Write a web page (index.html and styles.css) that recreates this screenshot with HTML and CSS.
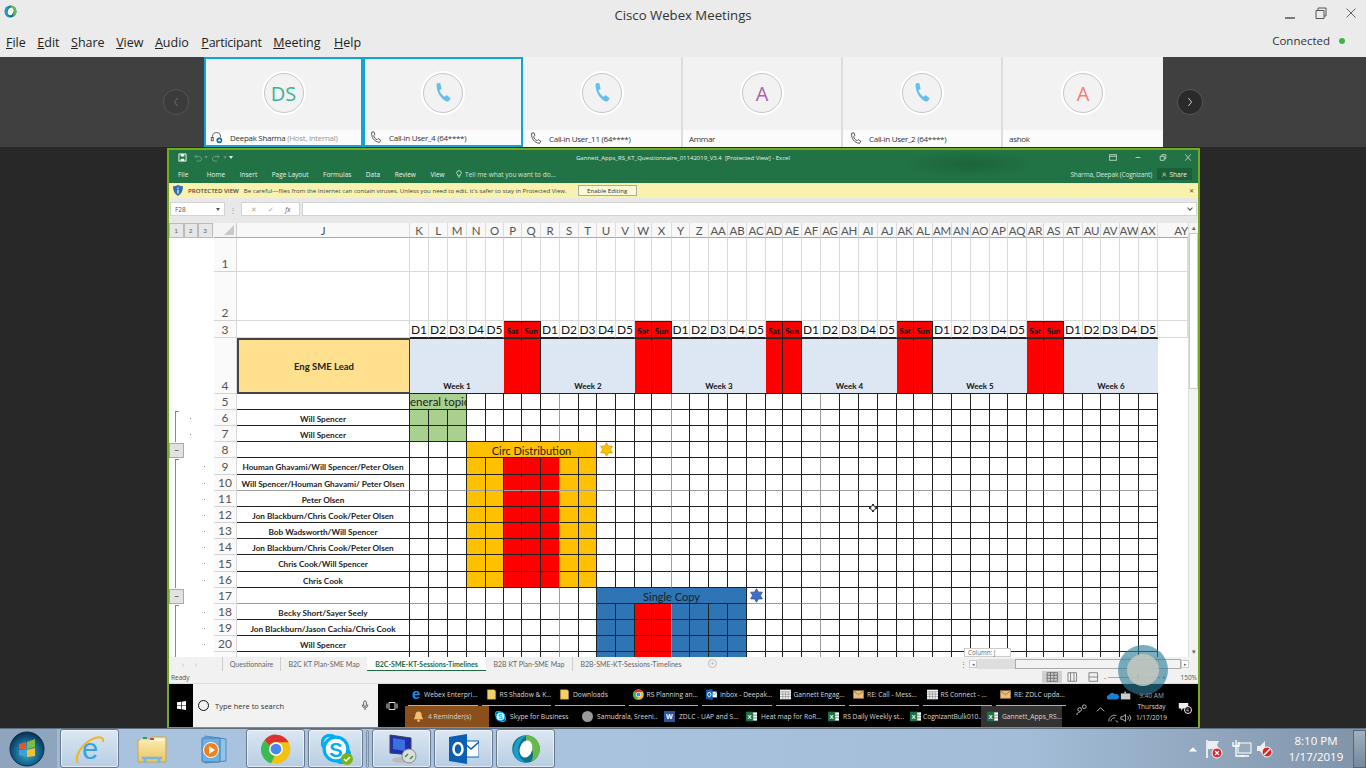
FILE: index.html
```html
<!DOCTYPE html>
<html lang="en">
<head>
<meta charset="utf-8">
<title>Cisco Webex Meetings</title>
<link rel="stylesheet" href="styles.css">
</head>
<body>
<svg class="sprite" aria-hidden="true">
  <defs>
    <radialGradient id="orbG" cx="50%" cy="60%" r="60%"><stop offset="0" stop-color="#3fb0c8"/><stop offset=".6" stop-color="#14648f"/><stop offset="1" stop-color="#0b2c4a"/></radialGradient>
    <linearGradient id="folderG" x1="0" y1="0" x2="0" y2="1"><stop offset="0" stop-color="#fdf0b4"/><stop offset="1" stop-color="#e8c566"/></linearGradient>
    <symbol id="phone" viewBox="0 0 24 24"><path d="M5 1.500 9 1l1.500 6.500-2.400 1.600c1 3 3 5.500 5.700 7l2.200-1.800 4.500 3.700-3 3.500C10 19.500 4.500 11 5 1.500Z" fill="#63c0ea"/></symbol>
    <symbol id="handset" viewBox="0 0 24 24"><path d="M5 2 9 1.500l2 5-2.500 2c1 3.500 3 6 6.500 7.500l2-2 4.500 3-2 4C10 20 3.500 12 5 2Z" fill="none" stroke="#444" stroke-width="1.600"/></symbol>
    <symbol id="webex" viewBox="0 0 24 24"><circle cx="12" cy="12" r="11" fill="#0e6f8e"/><path d="M12 1a11 11 0 0 1 11 11c0 5-3 9-7 10 3-4 2-12-4-14Z" fill="#66b94a"/><path d="M2 15C1 8 6 1 13 1 9 3 5 8 6 15c.6 4 3 6 6 8C7 23 3 20 2 15Z" fill="#1aa0c8"/><ellipse cx="12" cy="12" rx="5" ry="7" fill="#fff" transform="rotate(15 12 12)"/></symbol>
    <symbol id="xl" viewBox="0 0 16 16"><rect x="6" y="2" width="10" height="12" fill="#fff"/><path d="M10 2v12M6 6h10M6 10h10" stroke="#1d7044"/><rect y="1" width="10" height="14" fill="#1d7044"/><text x="5" y="11.500" font-family="Liberation Sans" font-size="9" font-weight="700" fill="#fff" text-anchor="middle">X</text></symbol>
    <symbol id="mail" viewBox="0 0 16 12"><rect x=".5" y=".5" width="15" height="11" fill="#e9c07d" stroke="#a7783a"/><path d="m.5.500 7.500 6 7.500-6" fill="none" stroke="#7c5a2a"/></symbol>
    <symbol id="cal" viewBox="0 0 16 14"><rect width="16" height="14" fill="#f0f0f0"/><path d="M0 3h16M0 6.500h16M0 10h16M4 3v11M8 3v11M12 3v11" stroke="#777" stroke-width=".8"/></symbol>
    <symbol id="chrome" viewBox="0 0 24 24"><circle cx="12" cy="12" r="11.500" fill="#f4c20d"/><path d="M12 .5A11.500 11.500 0 0 1 22 6.500H12a5.500 5.500 0 0 0-5 3L2.800 5A11.500 11.500 0 0 1 12 .5Z" fill="#db3236"/><path d="M2.800 5 7 9.500a5.500 5.500 0 0 0 4 8l-3 6A11.500 11.500 0 0 1 2.800 5Z" fill="#3cba54"/><circle cx="12" cy="12" r="5.500" fill="#fff"/><circle cx="12" cy="12" r="4.300" fill="#4885ed"/></symbol>
    <symbol id="skype" viewBox="0 0 24 24"><circle cx="7" cy="7" r="6" fill="none" stroke="#00aff0" stroke-width="2.500"/><circle cx="17" cy="17" r="6" fill="none" stroke="#00aff0" stroke-width="2.500"/><circle cx="12" cy="12" r="9.500" fill="#fff" stroke="#00aff0" stroke-width="2.500"/><text x="12" y="18" font-family="Liberation Sans" font-size="16" font-weight="700" fill="#00aff0" text-anchor="middle">S</text></symbol>
    <symbol id="outlook" viewBox="0 0 30 30"><rect x="14" y="7" width="16" height="16" fill="#fff" stroke="#0a5fb4"/><path d="m14 8 8 7 8-7" fill="none" stroke="#0a5fb4" stroke-width="1.500"/><path d="M0 3 18 0v30L0 27Z" fill="#0a5fb4"/><ellipse cx="9" cy="15" rx="4.500" ry="6" fill="none" stroke="#fff" stroke-width="2.500"/></symbol>
    <symbol id="bell" viewBox="0 0 12 12"><path d="M6 .5c2.500 0 3.500 2 3.500 4.500 0 2 1.500 3 1.500 4H1c0-1 1.500-2 1.500-4C2.500 2.500 3.500.5 6 .5Z" fill="#f0c070"/><circle cx="6" cy="10.500" r="1.400" fill="#f0c070"/></symbol>
    <symbol id="fold" viewBox="0 0 14 16"><path d="M1 1h10l2 2v12H1Z" fill="#f2cf6a" stroke="#b5902f" stroke-width=".6"/></symbol>
  </defs>
</svg>

<header class="wx-bar">
  <div class="wx-title-row">
    <svg class="wx-logo"><use href="#webex"/></svg>
    <div class="wx-title">Cisco Webex Meetings</div>
    <div class="wx-controls">
      <svg class="wc" viewBox="0 0 12 12"><path d="M1 11h10" stroke="#555" stroke-width="1.500"/></svg>
      <svg class="wc" viewBox="0 0 12 12"><path d="M1 3.500h8v8H1zM3 3.500V1h8v8H9" fill="none" stroke="#555"/></svg>
      <svg class="wc" viewBox="0 0 12 12"><path d="m1.500 1.500 9 9m0-9-9 9" stroke="#666"/></svg>
    </div>
  </div>
  <div class="wx-menu-row">
    <nav class="wx-menu">
      <span><u>F</u>ile</span><span><u>E</u>dit</span><span><u>S</u>hare</span><span><u>V</u>iew</span><span><u>A</u>udio</span><span class="m-part"><u>P</u>articipant</span><span class="m-meet"><u>M</u>eeting</span><span><u>H</u>elp</span>
    </nav>
    <div class="wx-status">Connected<i class="dot-green"></i></div>
  </div>
</header>

<section class="strip">
  <button class="nav-btn"><svg viewBox="0 0 10 14"><path d="M7 2 3 7l4 5" fill="none" stroke="#777"/></svg></button>
  <div class="tiles">
    <article class="tile active">
      <div class="tile-top"><div class="avatar teal">DS</div></div>
      <div class="tile-label"><svg class="lbl-ic" viewBox="0 0 16 16"><path d="M3 9V7a5 5 0 0 1 10 0v1" fill="none" stroke="#444"/><rect x="1.500" y="8" width="2.500" height="4" fill="none" stroke="#444"/><circle cx="11.500" cy="11.500" r="3.500" fill="#0e6f8e"/><circle cx="11.500" cy="11.500" r="1.500" fill="#fff"/></svg><span>Deepak Sharma <em>(Host, internal)</em></span></div>
    </article>
    <article class="tile active">
      <div class="tile-top"><div class="avatar"><svg class="ph"><use href="#phone"/></svg></div></div>
      <div class="tile-label"><svg class="lbl-ic"><use href="#handset"/></svg><span>Call-in User_4 (64****)</span></div>
    </article>
    <article class="tile">
      <div class="tile-top"><div class="avatar"><svg class="ph"><use href="#phone"/></svg></div></div>
      <div class="tile-label"><svg class="lbl-ic"><use href="#handset"/></svg><span>Call-in User_11 (64****)</span></div>
    </article>
    <article class="tile">
      <div class="tile-top"><div class="avatar purple">A</div></div>
      <div class="tile-label"><span>Ammar</span></div>
    </article>
    <article class="tile">
      <div class="tile-top"><div class="avatar"><svg class="ph"><use href="#phone"/></svg></div></div>
      <div class="tile-label"><svg class="lbl-ic"><use href="#handset"/></svg><span>Call-in User_2 (64****)</span></div>
    </article>
    <article class="tile">
      <div class="tile-top"><div class="avatar red">A</div></div>
      <div class="tile-label"><span>ashok</span></div>
    </article>
  </div>
  <button class="nav-btn right"><svg viewBox="0 0 10 14"><path d="m3 2 4 5-4 5" fill="none" stroke="#eee"/></svg></button>
</section>

<main class="stage">
  <div class="xl">
    <div class="xl-head">
      <div class="xl-title-row">
        <div class="qat">
          <svg class="qi" viewBox="0 0 10 10"><path d="M1 1h8v8H1z" fill="none" stroke="#fff"/><path d="M3 1h4v3H3zM3 6.500h4V9H3z" fill="#fff"/></svg>
          <svg class="qi dim" viewBox="0 0 10 10"><path d="M2 4h5a2 2 0 0 1 0 5H4M2 4l2-2M2 4l2 2" fill="none" stroke="#6f9f85"/></svg>
          <i class="caret dimc"></i>
          <svg class="qi dim" viewBox="0 0 10 10"><path d="M8 4H3a2 2 0 0 0 0 5h3M8 4 6 2M8 4 6 6" fill="none" stroke="#6f9f85"/></svg>
          <i class="caret dimc"></i>
          <i class="caret"></i>
        </div>
        <div class="xl-title">Gannett_Apps_RS_KT_Questionnaire_01142019_V3.4&nbsp; [Protected View] - Excel</div>
        <div class="xl-win">
          <svg class="xw" viewBox="0 0 10 8"><path d="M.5.500h9v7h-9zM.5 2.500h9" fill="none" stroke="#cfe3d6"/></svg>
          <svg class="xw" viewBox="0 0 10 8"><path d="M2 4h6" stroke="#cfe3d6"/></svg>
          <svg class="xw" viewBox="0 0 10 8"><path d="M1.500 2.500h5v5h-5zM3.500 2.500V.5h5v5h-2" fill="none" stroke="#cfe3d6"/></svg>
          <svg class="xw" viewBox="0 0 10 8"><path d="m1.500 0 7 8m0-8-7 8" stroke="#cfe3d6"/></svg>
        </div>
      </div>
      <div class="xl-tab-row">
        <nav class="xl-tabs"><span class="t-file">File</span><span>Home</span><span>Insert</span><span>Page Layout</span><span>Formulas</span><span>Data</span><span>Review</span><span>View</span><span class="tell"><svg viewBox="0 0 8 10"><path d="M4 .5a3 3 0 0 1 1.500 5.600V7.500h-3V6.100A3 3 0 0 1 4 .5ZM3 9h2" fill="none" stroke="#dfe"/></svg>Tell me what you want to do...</span></nav>
        <div class="xl-user">Sharma, Deepak (Cognizant)</div>
        <div class="xl-share"><svg viewBox="0 0 10 10"><circle cx="5" cy="3.500" r="2.500" fill="none" stroke="#fff"/><path d="M1 10c0-3 2-4 4-4s4 1 4 4" fill="none" stroke="#fff"/></svg>Share</div>
      </div>
    </div>
    <div class="protect">
      <svg class="shield" viewBox="0 0 12 13"><path d="M6 0c2 1 4 1.500 6 1.500C12 7 10 11 6 13 2 11 0 7 0 1.500 2 1.500 4 1 6 0Z" fill="#2f6eb0"/><path d="M5.300 3h1.400v1.400H5.300zM5.300 5.500h1.400v4.500H5.300z" fill="#fff"/></svg>
      <b>PROTECTED VIEW</b>
      <span class="p-msg">Be careful—files from the Internet can contain viruses. Unless you need to edit, it's safer to stay in Protected View.</span>
      <button class="p-btn">Enable Editing</button>
      <span class="p-x">✕</span>
    </div>
    <div class="fbar">
      <div class="namebox">F28<i class="caret dark"></i></div>
      <span class="fdots">⋮</span>
      <div class="fbtns"><span>✕</span><span>✓</span><span class="fx">fx</span></div>
      <div class="finput"><i class="chev"></i></div>
    </div>
    <div class="sheet-wrap">
      <div class="sheet" id="sheet"></div>
      <aside class="vscroll">
        <div class="vbtn">▴</div>
        <div class="vtrack"><div class="vthumb"></div></div>
        <div class="vbtn">▾</div>
      </aside>
      <div class="tooltip">Column: J</div>
      <svg class="cursor" viewBox="0 0 10 10"><path d="M5 1v8M1 5h8" stroke="#333" stroke-width="2"/><circle cx="5" cy="5" r="2.500" fill="#fff" stroke="#333"/></svg>
    </div>
    <div class="tabbar">
      <div class="tab-nav"><span>‹</span><span>›</span></div>
      <div class="tab">Questionnaire</div>
      <div class="tab">B2C KT Plan-SME Map</div>
      <div class="tab current">B2C-SME-KT-Sessions-Timelines</div>
      <div class="tab">B2B KT Plan-SME Map</div>
      <div class="tab">B2B-SME-KT-Sessions-Timelines</div>
      <div class="tab-add">+</div>
      <div class="hscroll"><span class="h-dots">⋮</span><span class="h-arrow">◂</span><div class="h-track"><div class="h-thumb"></div></div><span class="h-arrow">▸</span></div>
    </div>
    <div class="statusbar">
      <span>Ready</span>
      <div class="views">
        <svg class="v sel" viewBox="0 0 20 14"><path d="M4 2h12v10H4zM4 5h12M4 8.500h12M8 2v10M12 2v10" fill="none" stroke="#666"/></svg>
        <svg class="v" viewBox="0 0 20 14"><path d="M5 2h10v10H5zM8 2v10M12 2v10" fill="none" stroke="#777"/></svg>
        <svg class="v" viewBox="0 0 20 14"><path d="M5 2h10v10H5zM5 7h10" fill="none" stroke="#777"/></svg>
      </div>
      <div class="zoomer"><span>-</span><div class="z-track"><i></i></div><span>+</span><em>150%</em></div>
    </div>
    <div class="itb">
      <div class="i-start"><svg viewBox="0 0 10 10"><path d="M0 1.500 4.500.8v3.900H0zM5.200.7 10 0v4.700H5.200zM0 5.300h4.500v3.900L0 8.500zM5.200 5.300H10V10l-4.800-.7z" fill="#fff"/></svg></div>
      <div class="i-search"><i class="ring"></i><span>Type here to search</span><svg class="mic" viewBox="0 0 8 12"><rect x="2.500" y="1" width="3" height="6" rx="1.500" fill="none" stroke="#555"/><path d="M1 5c0 5 6 5 6 0M4 9v2" fill="none" stroke="#555"/></svg></div>
      <div class="i-view"><svg viewBox="0 0 12 10"><path d="M3 1.500h6v7H3zM1 2.500v5M11 2.500v5" fill="none" stroke="#ddd"/></svg></div>
      <div class="i-apps">
        <div class="i-row top">
          <div class="ti"><span class="ie-s">e</span>Webex Enterpri...</div>
          <div class="ti"><svg><use href="#fold"/></svg>RS Shadow &amp; K...</div>
          <div class="ti"><svg><use href="#fold"/></svg>Downloads</div>
          <div class="ti"><svg><use href="#chrome"/></svg>RS Planning an...</div>
          <div class="ti"><svg><use href="#outlook"/></svg>Inbox - Deepak...</div>
          <div class="ti"><svg><use href="#cal"/></svg>Gannett Engag...</div>
          <div class="ti"><svg><use href="#mail"/></svg>RE: Call - Mess...</div>
          <div class="ti"><svg><use href="#cal"/></svg>RS Connect - ...</div>
          <div class="ti"><svg><use href="#mail"/></svg>RE: ZDLC upda...</div>
        </div>
        <div class="i-row bot">
          <div class="bi rem"><svg><use href="#bell"/></svg>4 Reminder(s)</div>
          <div class="bi sk"><svg><use href="#skype"/></svg>Skype for Business</div>
          <div class="bi"><i class="chat"></i>Samudrala, Sreeni...</div>
          <div class="bi"><span class="wd">W</span>ZDLC - UAP and S...</div>
          <div class="bi"><svg><use href="#xl"/></svg>Heat map for RoR...</div>
          <div class="bi"><svg><use href="#xl"/></svg>RS Daily Weekly st...</div>
          <div class="bi cg"><svg><use href="#xl"/></svg>CognizantBulk010...</div>
          <div class="bi on"><svg><use href="#xl"/></svg>Gannett_Apps_RS...</div>
        </div>
      </div>
      <div class="i-tray">
        <div class="t-a"><svg viewBox="0 0 12 12"><circle cx="4" cy="6" r="2" fill="none" stroke="#ccc"/><circle cx="9" cy="3" r="2" fill="none" stroke="#ccc"/><path d="M1 12c0-2 1-3 3-3" fill="none" stroke="#ccc"/></svg><svg viewBox="0 0 12 12"><path d="m2 8 4-4 4 4" fill="none" stroke="#ccc"/></svg></div>
        <div class="t-b">
          <div class="t-line"><svg viewBox="0 0 14 10"><path d="M2 9a2.500 2.500 0 0 1 0-5 4 4 0 0 1 7-1 3 3 0 0 1 3 6Z" fill="#1d7fd0"/></svg><svg viewBox="0 0 14 10"><rect x="1" y="2" width="11" height="7" fill="#ccc"/><rect x="5" y="0" width="2" height="2" fill="#ccc"/></svg></div>
          <div class="t-line"><svg viewBox="0 0 14 10"><path d="M2 9a7 7 0 0 1 9-7M4.500 9a4 4 0 0 1 5-4M10 8l3 2" fill="none" stroke="#bbb"/></svg><svg viewBox="0 0 14 10"><path d="M1 3.500h2L6.500 1v8L3 6.500H1Z" fill="none" stroke="#ccc"/><path d="M9 3a3 3 0 0 1 0 4M11 1.500a5 5 0 0 1 0 7" fill="none" stroke="#ccc"/></svg></div>
        </div>
        <div class="t-date"><span class="dim">9:40 AM</span><span>Thursday</span><span>1/17/2019</span></div>
        <div class="t-note"><svg viewBox="0 0 14 12"><path d="M1 1h12v7H6l-2 3V8H1Z" fill="#eee"/></svg><i>4</i></div>
      </div>
    </div>
    <div class="wx-ring"><div class="wx-ring-in"></div></div>
  </div>
</main>

<footer class="win7">
  <div class="orb-wrap"><svg class="orb" viewBox="0 0 36 36"><circle cx="18" cy="18" r="17" fill="url(#orbG)" stroke="#0b2c4a"/><path d="M10 13l7-2v7h-7z" fill="#e2572f"/><path d="M18 11l8-3v8l-8 2z" fill="#7fbc41"/><path d="M10 19h7v7l-7-2z" fill="#3aa0e0"/><path d="M18 19l8-2v8l-8 1z" fill="#f2c230"/></svg></div>
  <div class="tb framed"><svg class="big" viewBox="0 0 30 30"><path d="M3 29C-1 24 6 9 20 4c7-2 9 1 8 4" fill="none" stroke="#f2b51d" stroke-width="2"/><text x="15" y="25" font-family="Liberation Sans" font-size="29" fill="#37a3e0" text-anchor="middle">e</text></svg></div>
  <div class="tb"><svg class="big" viewBox="0 0 30 30"><path d="M1 6h12l2-3h14v25H1Z" fill="url(#folderG)" stroke="#c9a44a"/><path d="M3 6h24" stroke="#fff"/><rect x="6" y="3" width="4" height="2" fill="#3a9e3a"/><rect x="13" y="4" width="4" height="2" fill="#c94a3a"/><path d="M5 24h20M8 24v5M22 24v5" stroke="#6fb8e8" stroke-width="2.500" fill="none"/></svg></div>
  <div class="tb"><svg class="big" viewBox="0 0 30 30"><path d="M6 2 27 5v22L6 29Z" fill="#8fc3e8" stroke="#4a8cc0"/><rect x="3" y="4" width="18" height="24" rx="1" fill="#6eb0e0" stroke="#3d7fb5"/><circle cx="12" cy="16" r="7.500" fill="#f08020" stroke="#fff"/><path d="m10 12 6 4-6 4Z" fill="#fff"/></svg></div>
  <div class="tb framed"><svg class="big"><use href="#chrome"/></svg></div>
  <div class="tb framed narrow"><svg class="big"><use href="#skype"/></svg><svg class="sk-ok" viewBox="0 0 12 12"><circle cx="6" cy="6" r="6" fill="#7ab317"/><path d="m3 6 2 2 4-4" fill="none" stroke="#fff" stroke-width="1.500"/></svg></div>
  <div class="tb-sep"></div>
  <div class="tb framed"><svg class="big" viewBox="0 0 30 30"><path d="M3 1 24 4v17L3 19Z" fill="#1b2fb0" stroke="#444"/><path d="m6 4 12 2v11L6 15Z" fill="#3d6ee0"/><ellipse cx="15" cy="26" rx="10" ry="3" fill="#bbb"/><circle cx="22" cy="22" r="7" fill="#ddd" stroke="#888"/><path d="m18 23 3-3M23 25l3-3" stroke="#2a9a3a" stroke-width="1.500"/></svg></div>
  <div class="tb framed"><svg class="big"><use href="#outlook"/></svg></div>
  <div class="tb framed"><svg class="big"><use href="#webex"/></svg></div>
  <div class="sys">
    <svg class="tray-ic up" viewBox="0 0 12 8"><path d="M1 7 6 2l5 5Z" fill="#fff"/></svg>
    <svg class="tray-ic flag" viewBox="0 0 18 20"><path d="M2 1v18" stroke="#fff" stroke-width="1.500"/><path d="M3 2h11l-2 4 2 4H3Z" fill="#eee"/><circle cx="12" cy="14" r="5" fill="#d8262c" stroke="#fff"/><path d="m10 12 4 4m0-4-4 4" stroke="#fff" stroke-width="1.300"/></svg>
    <svg class="tray-ic net" viewBox="0 0 20 20"><rect x="6" y="4" width="13" height="10" fill="#9ab" stroke="#fff"/><path d="M4 1v6M1 3v4h6V3M4 7v10h8" fill="none" stroke="#fff" stroke-width="1.300"/><path d="M9 17h8" stroke="#fff" stroke-width="1.500"/></svg>
    <svg class="tray-ic spk" viewBox="0 0 18 20"><path d="M2 7h3l5-5v15l-5-5H2Z" fill="#eee"/><circle cx="12" cy="13" r="5" fill="#d8262c" stroke="#fff"/><path d="m9 16 6-6" stroke="#fff" stroke-width="1.500"/></svg>
    <div class="clock"><span>8:10 PM</span><span>1/17/2019</span></div>
    <div class="show-desk"></div>
  </div>
</footer>
<script src="script.js"></script>
</body>
</html>
```
FILE: styles.css
```css
* { box-sizing: border-box; }
html, body { margin: 0; height: 100%; }
body { width: 1366px; height: 768px; overflow: hidden; display: flex; flex-direction: column; font-family: "Open Sans", "Noto Sans", sans-serif; background: #282828; color: #222; }
.sprite { position: absolute; width: 0; height: 0; }
em { font-style: normal; }

/* webex header */
.wx-bar { height: 57px; flex: none; background: #ebebeb; }
.wx-title-row { height: 29px; display: grid; grid-template-columns: 1fr auto 1fr; align-items: center; padding: 0 9px; }
.wx-logo { width: 13px; height: 13px; margin: -7px 0 0 -5px; }
.wx-title { font-size: 13.200px; color: #333; }
.wx-controls { justify-self: end; display: flex; gap: 18.500px; margin-top: -3px; }
.wc { width: 12px; height: 12px; }
.wx-menu-row { height: 28px; display: flex; align-items: center; padding: 0 21px 2px 6px; justify-content: space-between; }
.wx-menu { display: flex; gap: 11.500px; font-size: 12.500px; color: #222; }
.m-part { letter-spacing: -.25px; margin-left: 1px; }
.m-meet { margin-right: 2px; }
.wx-status { font-size: 11.500px; color: #333; display: flex; align-items: center; gap: 9px; margin-top: -3px; }
.dot-green { width: 6px; height: 6px; border-radius: 50%; background: #3fb24a; }

/* tile strip */
.strip { height: 90px; flex: none; background: #404040; display: flex; align-items: center; padding-left: 163px; }
.nav-btn { width: 26px; height: 26px; border-radius: 50%; padding: 6px 8px; background: #3b3b3b; border: 1px solid #555; }
.nav-btn svg { display: block; width: 8px; height: 12px; }
.nav-btn.right { background: #2a2a2a; margin-left: 14px; }
.tiles { display: flex; height: 90px; margin-left: 15px; }
.tile { width: 160px; display: flex; flex-direction: column; background: #f2f2f2; border-right: 2px solid #dedede; }
.tile:first-child { width: 159px; }
.tile:last-child { border-right: 0; }
.tile.active { border: 2px solid #10a3d8; }
.tile-top { flex: 1; display: flex; justify-content: center; padding-top: 16px; }
.tile.active .tile-top { padding-top: 14px; }
.avatar { width: 40px; height: 40px; border-radius: 50%; border: 1px solid #c6c6c6; box-shadow: 0 0 0 2px #fff; display: flex; align-items: center; justify-content: center; font-size: 20px; background: #f2f2f2; }
.teal { color: #3bb39c; } .purple { color: #a962b4; } .red { color: #f47a75; }
.ph { width: 22px; height: 22px; }
.tile-label { height: 17px; flex: none; background: #fbfbfb; display: flex; align-items: center; padding-left: 6px; gap: 7px; font-size: 8px; letter-spacing: -.3px; color: #333; white-space: nowrap; }
.tile.active .tile-label { height: 15px; padding-left: 4px; }
.tile-label em { color: #999; }
.lbl-ic { width: 13px; height: 13px; flex: none; }

/* excel window */
.stage { flex: 1; min-height: 0; padding: 1px 0 0 167px; background: #282828; }
.xl { position: relative; width: 1033px; height: 580px; border: 2px solid #74ab1e; border-bottom-width: 1px; display: flex; flex-direction: column; background: #fff; overflow: hidden; }
.xl-head { height: 33px; flex: none; background: radial-gradient(ellipse 70px 14px at 800px 14px, #1c6439, transparent), #217346; color: #e6f2ea; }
.xl-title-row { height: 15px; position: relative; display: flex; align-items: center; justify-content: space-between; padding: 0 6px 0 9px; }
.qat { display: flex; align-items: center; gap: 2px; }
.qi { width: 9px; height: 9px; margin-right: 2px; }
.qi.dim { margin-left: 2px; margin-right: 0; }
.caret { width: 0; height: 0; border: 2px solid transparent; border-top: 3px solid #dfe; border-bottom: 0; }
.caret.dimc { border-top-color: #5d8f75; }
.caret.dark { border-top-color: #555; }
.xl-title { position: absolute; left: 407px; font-size: 6px; white-space: nowrap; top: 4px; }
.xl-win { display: flex; gap: 17px; }
.xw { width: 8px; height: 7px; }
.xl-tab-row { height: 18px; display: flex; align-items: center; font-size: 6.500px; padding: 0 6px 0 9px; }
.xl-tabs { display: flex; gap: 14.500px; flex: 1; align-items: center; }
.t-file { margin-right: 4px; }
.tell { display: flex; align-items: center; gap: 3px; margin-left: -3px; color: #cfe3d6; }
.tell svg { width: 6px; height: 8px; }
.xl-user { margin-right: 5px; letter-spacing: -.15px; color: #d6e6dc; }
.xl-share { display: flex; align-items: center; gap: 3px; background: #1a5f38; padding: 3px 5px; width: 35px; height: 12px; }
.xl-share svg { width: 7px; height: 7px; }
.protect { height: 15px; flex: none; background: #f9f2ae; display: flex; align-items: center; font-size: 6.100px; color: #444; padding: 0 4px; }
.shield { width: 10px; height: 11px; margin-right: 5px; flex: none; }
.protect b { font-weight: 600; margin-right: 5px; }
.p-btn { font: inherit; height: 11px; width: 59px; margin-left: 11px; padding: 0; background: #fbf8d8; border: 1px solid #a9a9a9; color: #333; }
.p-x { margin-left: auto; font-size: 6px; }
.fbar { height: 25px; flex: none; background: #e8e8e8; display: flex; align-items: center; padding: 1px 1px 4px 1px; font-size: 6.500px; color: #555; }
.namebox { width: 55px; height: 14px; background: #fff; border: 1px solid #d4d4d4; display: flex; align-items: center; justify-content: space-between; padding: 0 4px; }
.fdots { width: 16px; text-align: center; font-size: 8px; color: #999; }
.fbtns { width: 59px; height: 14px; background: #fff; border: 1px solid #d4d4d4; display: flex; align-items: center; justify-content: space-around; color: #aaa; padding: 0 3px; }
.fx { font-style: italic; color: #555; }
.finput { flex: 1; margin-left: 2px; height: 14px; background: #fff; border: 1px solid #d4d4d4; display: flex; align-items: center; justify-content: flex-end; padding-right: 4px; }
.chev { width: 4px; height: 4px; border-right: 1px solid #555; border-bottom: 1px solid #555; transform: rotate(45deg); margin-top: -2px; }

/* sheet */
.sheet-wrap { position: relative; flex: none; height: 434px; display: flex; background: #fff; overflow: hidden; }
.sheet { width: 1019px; flex: none; display: grid; align-content: start; font-family: Lato, "Noto Sans", sans-serif;
  grid-template-columns: 45px 23px 173px
    19px 19px 19px 19px 18px 18px 19px
    19px 19px 18px 19px 19px 17px 20px
    18px 19px 19px 19px 19px 17px 19px
    19px 19px 19px 19px 19px 17px 19px
    19px 19px 19px 18px 19px 17px 20px
    19px 18px 19px 19px 19px 30px;
  grid-template-rows: 15px 34px 49px 17px 56px repeat(4, 16px) 17px repeat(5, 16px) 17px repeat(5, 16px) 6px;
}
.c { min-width: 0; overflow: hidden; display: flex; align-items: center; justify-content: center; white-space: nowrap; }
.gut { justify-content: flex-start; position: relative; overflow: visible; }
.br { width: 1px; align-self: stretch; background: #888; margin-left: 6px; }
.br.first { border-top: 1px solid #888; margin-top: 1px; width: 4px; background: linear-gradient(#888, #888) left / 1px 100% no-repeat; }
.dotm { width: 1px; height: 1px; background: #888; }
.dotm.d2 { margin-left: 28px; } .dotm.d1 { margin-left: 14px; }
.br.first + .dotm.d2 { margin-left: 25px; }
.br.first + .dotm.d1 { margin-left: 11px; }
.lv { height: 15px; background: #e7e7e7; border: 1px solid #bbb; font-size: 6.500px; color: #666; display: flex; align-items: center; justify-content: center; }
.levels { display: flex; justify-content: flex-start; background: #f2f2f2; }
.levels .lv { width: 14.500px; flex: none; }
.minus { width: 15px; height: 15px; background: #e2e2e2; border: 1px solid #aaa; display: flex; align-items: center; justify-content: center; font-size: 9px; line-height: 1; color: #444; }
.corner { background: #f4f4f4; border-bottom: 1px solid #aaa; border-right: 1px solid #ccc; position: relative; }
.corner::after { content: ""; position: absolute; right: 2px; bottom: 2px; border: 5px solid #c9c9c9; border-top-color: transparent; border-left-color: transparent; }
.ch { background: #f8f8f8; border-bottom: 1px solid #a8a8a8; border-right: 1px solid #dcdcdc; font-size: 11.500px; letter-spacing: -.2px; color: #555; }
.ay { justify-content: flex-end; border-right: 0; }
.rh { background: #fafafa; border-bottom: 1px solid #d4d4d4; border-right: 1px solid #d8d8d8; color: #555; font-size: 12px; align-items: flex-end; line-height: 15px; }
.lt { border-right: 1px solid #dadada; border-bottom: 1px solid #dadada; }
.r3 { font-size: 12px; color: #111; border-bottom-color: #222; }
.ss { background: #f00; border: 1px solid #222; border-left-width: 0; font-size: 8px; font-weight: 900; color: #111; padding-top: 2px; }
.ye { background: #ffe08f; border: 2px solid #444; border-right-width: 1px; font-weight: 700; font-size: 9.500px; color: #222; }
.wk { background: #dce7f3; border-bottom: 1px solid #222; border-top: 1px solid #222; font-size: 8px; font-weight: 700; color: #111; align-items: flex-end; padding-bottom: 2px; }
.rd4 { background: #f00; border-right: 1px solid #222; border-bottom: 1px solid #222; border-top: 1px solid #222; }
.g { border-right: 1px solid #222; border-bottom: 1px solid #222; }
.nm { font-size: 8.200px; font-weight: 700; color: #222; border-bottom: 1px solid #222; border-right: 1px solid #222; padding-top: 2px; }
.e { border-bottom: 1px solid #222; border-right: 1px solid #222; }
.f-gr { background: #a9d08e; }
.f-or { background: #ffc000; }
.f-rd { background: #f00; }
.f-bl { background: #2e75b6; }
.hd { font-size: 11px; color: #1d1d1d; border-bottom: 1px solid #222; border-right: 1px solid #222; padding-top: 2px; }
.topic { color: #1d1d1d; font-size: 11.500px; padding-top: 0; }
.topic span { flex: none; }
.gv { border-right: 1.500px solid #9d9d9d; }
.gh { border-bottom: 1.500px solid #9d9d9d; }
.star { padding: 0; }
.star svg { width: 15px; height: 15px; }
.vscroll { flex: 1; display: flex; flex-direction: column; background: #f3f3f3; border-left: 1px solid #ddd; }
.vbtn { height: 10px; font-size: 7px; line-height: 10px; text-align: center; color: #666; }
.vtrack { flex: 1; }
.vthumb { height: 156px; background: #fff; border: 1px solid #ccc; }
.tooltip { position: absolute; left: 795px; top: 425px; width: 47px; height: 9px; background: #fff; border: 1px solid #ccc; font-size: 6.200px; line-height: 7px; padding-left: 3px; color: #666; }
.cursor { position: absolute; left: 699px; top: 280px; width: 10px; height: 10px; }

/* tabs */
.tabbar { height: 14px; flex: none; background: #f1f1f1; display: flex; align-items: stretch; font-size: 7px; font-family: Lato, "Noto Sans", sans-serif; color: #666; }
.tab-nav { width: 53px; display: flex; gap: 11px; padding-left: 13px; color: #aaa; align-items: center; }
.tab { display: flex; align-items: center; padding: 0 7px; border-left: 1px solid #ccc; white-space: nowrap; }
.tab.current { background: #fff; color: #1d6b3f; font-weight: 700; border-bottom: 1px solid #1d6b3f; border-left: 0; }
.tab.current + .tab { border-left: 0; }
.tab:nth-child(2) { width: 58px; justify-content: center; }
.tab:nth-child(3) { width: 87px; justify-content: center; }
.tab:nth-child(4) { width: 119px; justify-content: center; padding: 0; }
.tab:nth-child(5) { width: 86px; justify-content: center; }
.tab:nth-child(6) { width: 117px; justify-content: center; padding: 0; }
.tab-add { width: 9px; height: 9px; border: 1px solid #bbb; border-radius: 50%; margin: 2px 0 0 19px; line-height: 6px; text-align: center; color: #aaa; font-size: 7px; }
.hscroll { margin-left: auto; width: 241px; display: flex; align-items: center; padding-right: 9px; color: #666; }
.h-dots { width: 12px; text-align: center; }
.h-arrow { width: 8px; height: 8px; background: #fff; border: 1px solid #ccc; font-size: 5px; line-height: 6px; text-align: center; flex: none; }
.h-track { flex: 1; height: 10px; background: #dedede; padding-left: 38px; }
.h-thumb { height: 10px; background: #f3f3f3; border: 1px solid #aaa; }
.statusbar { height: 13px; flex: none; background: #f1f1f1; display: flex; align-items: center; font-size: 6.500px; color: #555; padding-left: 2px; border-bottom: 1px solid #ddd; }
.views { margin-left: auto; display: flex; }
.v { width: 20.500px; height: 12px; }
.v.sel { background: #d0d0d0; }
.zoomer { display: flex; align-items: center; gap: 2px; margin-left: 1px; width: 94px; padding-right: 1px; }
.z-track { width: 52px; height: 1px; background: #aaa; position: relative; }
.z-track i { position: absolute; left: 29px; top: -3px; width: 2px; height: 7px; background: #555; }
.zoomer em { margin-left: auto; }
.wx-ring { position: absolute; left: 949px; top: 495px; width: 50px; height: 50px; border-radius: 50%; background: rgba(40,125,150,.62); display: flex; align-items: center; justify-content: center; }
.wx-ring-in { width: 32px; height: 32px; border-radius: 50%; background: rgba(200,200,190,.85); }

/* inner taskbar */
.itb { height: 43px; flex: none; background: #000; display: flex; color: #d6d6d6; font-size: 6.700px; }
.i-start { width: 24px; display: flex; align-items: center; justify-content: center; }
.i-start svg { width: 9px; height: 9px; }
.i-search { width: 185px; background: #f2f2f2; display: flex; align-items: center; color: #333; padding: 0 9px 0 5px; font-size: 7.500px; }
.ring { width: 11px; height: 11px; border: 1.500px solid #111; border-radius: 50%; margin-right: 6px; }
.mic { width: 8px; height: 11px; margin-left: auto; }
.i-view { width: 27px; display: flex; align-items: center; justify-content: center; }
.i-view svg { width: 12px; height: 10px; }
.i-apps { width: 660px; flex: none; display: flex; flex-direction: column; }
.i-row { display: flex; height: 22px; align-items: center; white-space: nowrap; }
.top { padding-left: 3px; gap: 4px; }
.bot { height: 21px; }
.ti { width: 69.500px; height: 22px; display: flex; align-items: center; gap: 3px; border-bottom: 1px solid #8fb7dc; padding-left: 4px; overflow: hidden; flex: none; }
.ti svg, .bi svg { width: 11px; height: 11px; flex: none; }
.ie-s { color: #1c8fe0; font-size: 15px; font-weight: 700; line-height: 1; width: 11px; margin-top: -3px; font-family: "Liberation Sans", sans-serif; }
.bi { width: 82px; height: 21px; flex: none; display: flex; align-items: center; gap: 4px; padding-left: 6px; overflow: hidden; }
.bi.rem { width: 84px; background: #8a4f1a; padding-left: 8px; }
.bi.sk { width: 87px; }
.bi.cg { width: 77px; gap: 2px; letter-spacing: -.05px; }
.bi.on { width: 81px; background: #333; }
.chat { width: 11px; height: 11px; border-radius: 50%; background: #999; flex: none; }
.wd { width: 11px; height: 11px; background: #2a5699; color: #fff; font-size: 7px; text-align: center; line-height: 11px; flex: none; font-weight: 700; }
.i-tray { flex: 1; display: flex; align-items: center; padding: 2px 2px 0 11px; min-width: 0; }
.t-a { display: flex; gap: 7.500px; margin-top: 6px; }
.t-a svg { width: 11px; height: 11px; }
.t-b { display: flex; flex-direction: column; gap: 12px; margin-left: 1px; }
.t-line { display: flex; gap: 1px; }
.t-line svg { width: 12px; height: 10px; }
.t-date { display: flex; flex-direction: column; align-items: center; font-size: 6.500px; line-height: 11px; margin-left: 5px; width: 30px; white-space: nowrap; }
.dim { color: #aaa; }
.t-note { position: relative; margin-left: 11px; }
.t-note svg { width: 11px; height: 10px; display: block; }
.t-note i { position: absolute; left: 6px; top: 4px; width: 8px; height: 8px; border: 1px solid #eee; border-radius: 50%; background: #000; font-size: 5px; line-height: 6px; text-align: center; font-style: normal; }

/* windows 7 taskbar */
.win7 { height: 40px; flex: none; display: flex; align-items: stretch; gap: 3px; padding-top: 1px; background: linear-gradient(90deg, #8da3ba 0, #a9c3de 6%, #a9c3de 45%, #a3bdd8 75%, #8094a8 100%); box-shadow: inset 0 1px 0 #5f6f7f; }
.orb-wrap { width: 57px; display: flex; align-items: center; justify-content: center; padding-right: 3px; background: #8ea5bd; }
.orb { width: 36px; height: 36px; }
.tb { width: 59px; display: flex; align-items: center; justify-content: center; position: relative; }
.tb.framed { border: 1px solid #66788c; border-radius: 3px; background: linear-gradient(#dce7f2, #b7cde3); box-shadow: inset 0 0 0 1px rgba(255,255,255,.6); }
.tb.narrow { width: 55px; }
.tb-sep { width: 3px; margin: 1px 0 0 0; border: 1px solid #7d90a4; border-radius: 2px; }
.big { width: 30px; height: 30px; }
.sk-ok { position: absolute; left: 32px; top: 23px; width: 12px; height: 12px; }
.sys { margin-left: auto; display: flex; align-items: center; color: #fff; }
.tray-ic { width: 20px; height: 20px; flex: none; }
.tray-ic.up { width: 10px; height: 8px; margin-right: 6px; }
.tray-ic.flag { margin-right: 8px; }
.tray-ic.net { margin-right: 2px; }
.clock { display: flex; flex-direction: column; align-items: center; font-size: 11.500px; line-height: 16px; width: 62px; margin-left: 11px; font-family: "Open Sans", sans-serif; }
.show-desk { width: 13px; height: 38px; margin-left: 6px; background: linear-gradient(#9fb0c0, #75889c); border: 1px solid #56677a; }
```
FILE: script.js
```js
(function () {
  var sheet = document.getElementById('sheet');
  var names = ['K','L','M','N','O','P','Q','R','S','T','U','V','W','X','Y','Z','AA','AB','AC','AD','AE','AF','AG','AH','AI','AJ','AK','AL','AM','AN','AO','AP','AQ','AR','AS','AT','AU','AV','AW','AX','AY'];
  var N = names.length;
  var idx = {}; names.forEach(function (n, i) { idx[n] = i; });
  var weekends = ['P','W','AD','AK','AR'];
  var grayV = { R: 1, X: 1, AF: 1 };
  var peopleRows = {
    6: 'Will Spencer', 7: 'Will Spencer',
    9: 'Houman Ghavami/Will Spencer/Peter Olsen',
    10: 'Will Spencer/Houman Ghavami/ Peter Olsen',
    11: 'Peter Olsen',
    12: 'Jon Blackburn/Chris Cook/Peter Olsen',
    13: 'Bob Wadsworth/Will Spencer',
    14: 'Jon Blackburn/Chris Cook/Peter Olsen',
    15: 'Chris Cook/Will Spencer',
    16: 'Chris Cook',
    18: 'Becky Short/Sayer Seely',
    19: 'Jon Blackburn/Jason Cachia/Chris Cook',
    20: 'Will Spencer'
  };
  var grayH = { 10: 1, 17: 1 };

  function add(cls, text, span) {
    var d = document.createElement('div');
    d.className = 'c ' + cls;
    if (span) d.style.gridColumn = 'span ' + span;
    if (text) d.textContent = text;
    sheet.appendChild(d);
    return d;
  }
  function gutter(r) {
    var d = add('gut', '');
    if (r === 8 || r === 17) { d.innerHTML = '<div class="minus">−</div>'; return; }
    var inner = '';
    if (r >= 6 && r <= 7) inner = '<i class="br' + (r === 6 ? ' first' : '') + '"></i><i class="dotm d1"></i>';
    if ((r >= 9 && r <= 16) || r >= 18) inner = '<i class="br' + (r === 9 || r === 18 ? ' first' : '') + '"></i>' + (r <= 20 ? '<i class="dotm d2"></i>' : '');
    d.innerHTML = inner;
  }
  function star(color, edge) {
    return '<svg viewBox="0 0 20 20"><path d="M10 1l2.600 4.500h5.200L15.200 10l2.600 4.500h-5.200L10 19l-2.600-4.500H2.200L4.800 10 2.200 5.500h5.200Z" fill="' + color + '" stroke="' + edge + '"/></svg>';
  }

  // header row
  var lv = add('levels', '');
  lv.innerHTML = '<div class="lv">1</div><div class="lv">2</div><div class="lv">3</div>';
  add('corner', '');
  add('ch', 'J');
  names.forEach(function (n) { add('ch' + (n === 'AY' ? ' ay' : ''), n); });

  // rows 1, 2
  [1, 2].forEach(function (r) {
    add('gut', '');
    add('rh', String(r));
    add('lt', '');
    names.forEach(function () { add('lt', ''); });
  });

  // row 3
  add('gut', '');
  add('rh', '3');
  add('lt', '');
  var dn = 1;
  names.forEach(function (n) {
    if (n === 'AY') { add('lt', ''); return; }
    if (weekends.indexOf(n) >= 0) { add('ss', 'Sat'); dn = -1; return; }
    if (dn === -1) { add('ss', 'Sun'); dn = 1; return; }
    add('lt r3', 'D' + dn);
    dn = dn === 5 ? 1 : dn + 1;
  });

  // row 4
  add('gut', '');
  add('rh', '4');
  add('ye', 'Eng SME Lead');
  for (var w = 0; w < 6; w++) {
    add('wk', 'Week ' + (w + 1), 5);
    if (w < 5) { add('rd4', ''); add('rd4', ''); }
  }
  add('', '');

  // rows 5-21
  function fillFor(r, i) {
    if (r >= 6 && r <= 7 && i <= 2) return 'f-gr';
    if (r >= 9 && r <= 16 && i >= idx.N && i <= idx.T) return i >= idx.P && i <= idx.R ? 'f-rd' : 'f-or';
    if (r >= 18 && i >= idx.U && i <= idx.AB) return i === idx.W || i === idx.X ? 'f-rd' : 'f-bl';
    return '';
  }
  for (var r = 5; r <= 21; r++) {
    gutter(r);
    add('rh', r <= 20 ? String(r) : '');
    add((peopleRows[r] ? 'nm' : 'e') + (grayH[r] ? ' gh' : ''), peopleRows[r] || '');
    for (var i = 0; i < N - 1; ) {
      if (r === 5 && i === 0) {
        var t = add('hd topic f-gr', '', 3);
        t.innerHTML = '<span>General topics</span>';
        i += 3; continue;
      }
      if (r === 8 && i === idx.N) { add('hd f-or', 'Circ Distribution', 7); i += 7; continue; }
      if (r === 17 && i === idx.U) { add('hd f-bl', 'Single Copy', 8); i += 8; continue; }
      var cls = 'g ' + fillFor(r, i) + (grayV[names[i]] ? ' gv' : '') + (grayH[r] ? ' gh' : '');
      var c = add(cls, '');
      if (r === 8 && i === idx.U) { c.classList.add('star'); c.innerHTML = star('#ffc000', '#c79a12'); }
      if (r === 17 && i === idx.AC) { c.classList.add('star'); c.innerHTML = star('#3f6fc4', '#2a4f96'); }
      i++;
    }
    add('', '');
  }
})();
```
